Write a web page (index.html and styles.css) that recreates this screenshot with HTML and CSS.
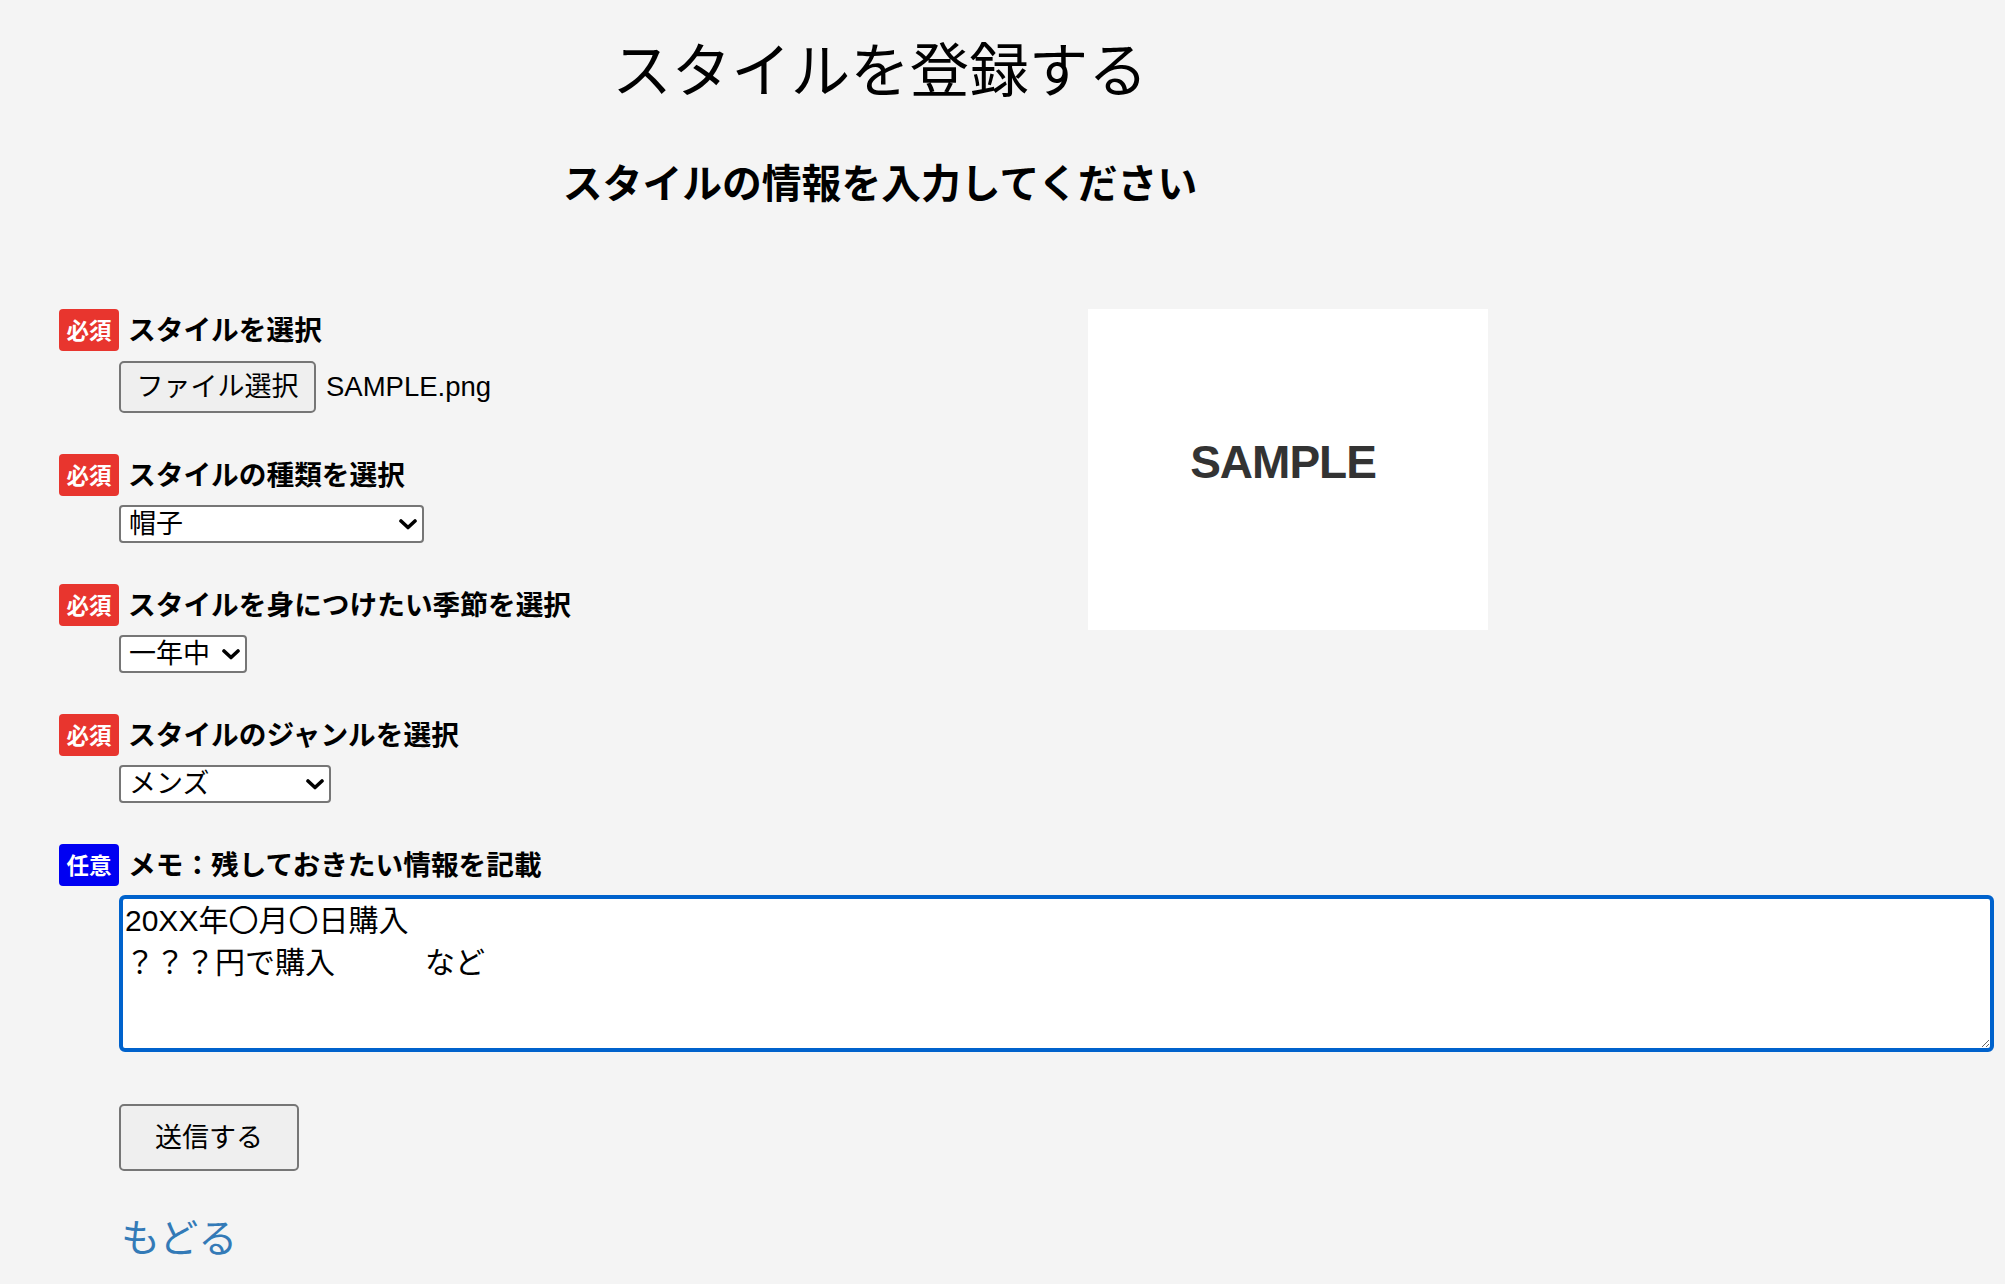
FILE: index.html
```html
<!DOCTYPE html>
<html lang="ja">
<head>
<meta charset="utf-8">
<title>スタイルを登録する</title>
<link rel="stylesheet" href="styles.css">
</head>
<body>
<div class="page">
  <header class="header">
    <h1 class="title">スタイルを登録する</h1>
    <h2 class="subtitle">スタイルの情報を入力してください</h2>
  </header>

  <form class="form" action="#" onsubmit="return false">
    <div class="top">
      <div class="fields">
        <div class="field">
          <div class="field-label"><span class="badge badge-req">必須</span><span class="label-text">スタイルを選択</span></div>
          <div class="field-control file-row">
            <button type="button" class="btn file-btn">ファイル選択</button>
            <span class="file-name">SAMPLE.png</span>
          </div>
        </div>

        <div class="field">
          <div class="field-label"><span class="badge badge-req">必須</span><span class="label-text">スタイルの種類を選択</span></div>
          <div class="field-control">
            <span class="select-wrap select-type">
              <select class="select">
                <option>帽子</option>
              </select>
              <svg class="chev" width="18" height="11" viewBox="0 0 18 11"><path d="M2 2 L9 8.5 L16 2" fill="none" stroke="#000" stroke-width="3.6" stroke-linecap="round" stroke-linejoin="round"/></svg>
            </span>
          </div>
        </div>

        <div class="field">
          <div class="field-label"><span class="badge badge-req">必須</span><span class="label-text">スタイルを身につけたい季節を選択</span></div>
          <div class="field-control">
            <span class="select-wrap select-season">
              <select class="select">
                <option>一年中</option>
              </select>
              <svg class="chev" width="18" height="11" viewBox="0 0 18 11"><path d="M2 2 L9 8.5 L16 2" fill="none" stroke="#000" stroke-width="3.6" stroke-linecap="round" stroke-linejoin="round"/></svg>
            </span>
          </div>
        </div>

        <div class="field">
          <div class="field-label"><span class="badge badge-req">必須</span><span class="label-text">スタイルのジャンルを選択</span></div>
          <div class="field-control">
            <span class="select-wrap select-genre">
              <select class="select">
                <option>メンズ</option>
              </select>
              <svg class="chev" width="18" height="11" viewBox="0 0 18 11"><path d="M2 2 L9 8.5 L16 2" fill="none" stroke="#000" stroke-width="3.6" stroke-linecap="round" stroke-linejoin="round"/></svg>
            </span>
          </div>
        </div>
      </div>

      <div class="preview"><span class="preview-text">SAMPLE</span></div>
    </div>

    <div class="field field-memo">
      <div class="field-label"><span class="badge badge-opt">任意</span><span class="label-text">メモ：残しておきたい情報を記載</span></div>
      <div class="field-control">
        <textarea class="memo">20XX年〇月〇日購入
？？？円で購入　　　など</textarea>
      </div>
    </div>

    <div class="actions">
      <button type="submit" class="btn submit-btn">送信する</button>
    </div>
  </form>

  <div class="back-row"><a class="back" href="#">もどる</a></div>
</div>
</body>
</html>
```

FILE: styles.css
```css
html, body {
  margin: 0;
  padding: 0;
  background: #f4f4f4;
}

body {
  font-family: "Noto Sans CJK JP", "Noto Sans", sans-serif;
  color: #000;
}

.page {
  padding: 26px 11px 0 59px;
}

.header {
  width: 1642px;
  text-align: center;
}

.title {
  margin: 0;
  font-size: 59.5px;
  line-height: 80px;
  font-weight: 400;
}

.subtitle {
  margin: 48px 0 0;
  font-size: 39.8px;
  line-height: 54px;
  font-weight: 700;
}

.form {
  margin-top: 101px;
}

.top {
  display: flex;
  align-items: flex-start;
}

.fields {
  flex: 0 0 1029px;
}

.field {
  margin-bottom: 41px;
}

.field-label {
  display: flex;
  align-items: center;
  gap: 9px;
  height: 42px;
}

.badge {
  display: flex;
  align-items: center;
  justify-content: center;
  width: 60px;
  height: 42px;
  box-sizing: border-box;
  border-radius: 4px;
  color: #fff;
  font-size: 22.5px;
  font-weight: 700;
  line-height: 1;
  padding-bottom: 2px;
}

.badge-req {
  background: #e8352e;
}

.badge-opt {
  background: #0000f2;
}

.label-text {
  font-size: 27.7px;
  font-weight: 700;
  line-height: 38px;
  padding-bottom: 4px;
}

.field-control {
  margin-top: 9px;
  padding-left: 60px;
}

.file-row {
  margin-top: 10px;
  display: flex;
  align-items: center;
  gap: 10px;
}

.btn {
  box-sizing: border-box;
  background: #efefef;
  border: 2px solid #767676;
  border-radius: 5px;
  color: #000;
  font-family: "Noto Sans CJK JP", sans-serif;
  font-size: 27px;
  padding: 0 0 5px;
  line-height: 1;
}

.file-btn {
  width: 197px;
  height: 52px;
}

.file-name {
  font-family: "Liberation Sans", "Noto Sans CJK JP", sans-serif;
  font-size: 27.5px;
}

.select-wrap {
  position: relative;
  display: inline-flex;
}

.select {
  -webkit-appearance: none;
  appearance: none;
  box-sizing: border-box;
  height: 38px;
  padding: 0 30px 4px 8px;
  background: #fff;
  border: 2px solid #767676;
  border-radius: 4px;
  color: #000;
  font-family: "Noto Sans CJK JP", sans-serif;
  font-size: 27px;
  line-height: 30px;
}

.select-type .select { width: 305px; }
.select-season .select { width: 128px; }
.select-genre .select { width: 212px; }

.chev {
  position: absolute;
  right: 7px;
  top: 14px;
  pointer-events: none;
}

.preview {
  flex: 0 0 400px;
  height: 321px;
  background: #fff;
  display: flex;
  align-items: center;
  justify-content: center;
  padding: 0 10px 16px 0;
  box-sizing: border-box;
}

.preview-text {
  font-family: "Liberation Sans", sans-serif;
  font-weight: 700;
  font-size: 46px;
  letter-spacing: -1px;
  color: #333;
}

.memo {
  display: block;
  box-sizing: border-box;
  width: 1875px;
  height: 157px;
  margin: 0;
  padding: 1px 2px;
  border: 4px solid #0062cc;
  border-radius: 6px;
  background: #fff;
  color: #000;
  font-family: "Liberation Sans", "Noto Sans CJK JP", sans-serif;
  font-size: 30px;
  line-height: 42px;
  outline: none;
}

.field-memo {
  margin-bottom: 52px;
}

.actions {
  padding-left: 60px;
}

.submit-btn {
  width: 180px;
  height: 67px;
}

.back-row {
  display: flex;
  padding: 39px 0 0 62px;
  height: 50px;
}

.back {
  font-size: 39px;
  line-height: 50px;
  color: #337ab7;
  text-decoration: none;
}
```
